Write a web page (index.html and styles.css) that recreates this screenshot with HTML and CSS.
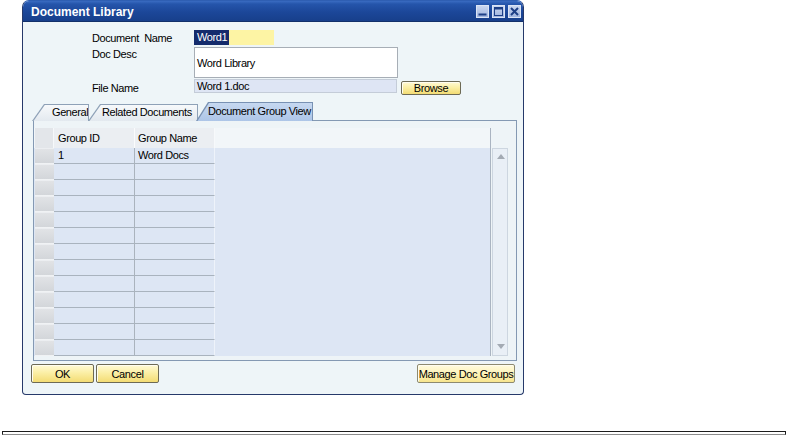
FILE: index.html
```html
<!DOCTYPE html>
<html lang="en">
<head>
<meta charset="utf-8">
<title>Document Library</title>
<link rel="stylesheet" href="styles.css">
</head>
<body>
<div class="window">
  <div class="titlebar">
    <span class="title">Document Library</span>
    <div class="winbtns">
      <span class="wb"><svg width="13" height="13" viewBox="0 0 13 13"><rect x="2.5" y="8.5" width="8" height="2" fill="#1d3f86"/></svg></span>
      <span class="wb"><svg width="13" height="13" viewBox="0 0 13 13"><rect x="2.5" y="2.5" width="8" height="8" fill="none" stroke="#1d3f86"/><rect x="2.5" y="2.5" width="8" height="2" fill="#1d3f86"/></svg></span>
      <span class="wb"><svg width="13" height="13" viewBox="0 0 13 13"><path d="M3 3 L10 10 M10 3 L3 10" stroke="#1d3f86" stroke-width="2"/></svg></span>
    </div>
  </div>

  <div class="content">
    <div class="form">
      <div class="row r1">
        <label class="lbl">Document&nbsp; Name</label>
        <div class="field mandatory"><span class="sel">Word1</span></div>
      </div>
      <div class="row r2">
        <label class="lbl">Doc Desc</label>
        <div class="field memo">Word Library</div>
      </div>
      <div class="row r3">
        <label class="lbl">File Name</label>
        <div class="field readonly">Word 1.doc</div>
        <button class="btn browse">Browse</button>
      </div>
    </div>

    <div class="tabs">
      <div class="tab t-general"><div class="tab-face">General</div></div>
      <div class="tab t-related"><div class="tab-face">Related Documents</div></div>
      <div class="tab t-group active"><div class="tab-face">Document Group View</div></div>
    </div>

    <div class="panel">
      <div class="grid">
        <div class="ghead">
          <span class="rh"></span>
          <span class="c c1">Group ID</span>
          <span class="c c2">Group Name</span>
        </div>
        <div class="grow"><span class="rh"></span><span class="c c1">1</span><span class="c c2">Word Docs</span></div>
        <div class="grow"><span class="rh"></span><span class="c c1"></span><span class="c c2"></span></div>
        <div class="grow"><span class="rh"></span><span class="c c1"></span><span class="c c2"></span></div>
        <div class="grow"><span class="rh"></span><span class="c c1"></span><span class="c c2"></span></div>
        <div class="grow"><span class="rh"></span><span class="c c1"></span><span class="c c2"></span></div>
        <div class="grow"><span class="rh"></span><span class="c c1"></span><span class="c c2"></span></div>
        <div class="grow"><span class="rh"></span><span class="c c1"></span><span class="c c2"></span></div>
        <div class="grow"><span class="rh"></span><span class="c c1"></span><span class="c c2"></span></div>
        <div class="grow"><span class="rh"></span><span class="c c1"></span><span class="c c2"></span></div>
        <div class="grow"><span class="rh"></span><span class="c c1"></span><span class="c c2"></span></div>
        <div class="grow"><span class="rh"></span><span class="c c1"></span><span class="c c2"></span></div>
        <div class="grow"><span class="rh"></span><span class="c c1"></span><span class="c c2"></span></div>
        <div class="grow"><span class="rh"></span><span class="c c1"></span><span class="c c2"></span></div>
      </div>
      <div class="vs-col">
        <div class="vscroll">
          <svg class="arrow" width="8" height="5" viewBox="0 0 8 5"><path d="M0 5 L4 0 L8 5 Z" fill="#a3aab3"/></svg>
          <svg class="arrow" width="8" height="5" viewBox="0 0 8 5"><path d="M0 0 L8 0 L4 5 Z" fill="#a3aab3"/></svg>
        </div>
      </div>
    </div>

    <div class="actions">
      <button class="btn ok">OK</button>
      <button class="btn cancel">Cancel</button>
      <button class="btn manage">Manage Doc Groups</button>
    </div>
  </div>
</div>

<div class="rule"></div>
</body>
</html>
```

FILE: styles.css
```css
* {
  box-sizing: border-box;
}

body {
  margin: 0;
  background: #ffffff;
  font-family: "Liberation Sans", Arial, sans-serif;
  font-size: 11px;
  letter-spacing: -0.4px;
  color: #000000;
}

/* ---------- window frame ---------- */
.window {
  margin-left: 22px;
  width: 502px;
  border: 1px solid #26396a;
  border-top-color: #2f5fb3;
  border-radius: 7px 7px 4px 4px;
  background: #eef5f8;
  overflow: hidden;
}

.titlebar {
  height: 21px;
  display: flex;
  align-items: center;
  justify-content: space-between;
  padding: 0 2px 0 8px;
  background: linear-gradient(#3a6cc2 0, #2555ab 3px, #1c4799 55%, #173f8b 100%);
  border-bottom: 1px solid #12306a;
}

.title {
  color: #ffffff;
  font-weight: bold;
  font-size: 12px;
  letter-spacing: 0;
  padding-top: 1px;
}

.winbtns {
  display: flex;
  gap: 3px;
  padding-top: 1px;
}

.wb {
  width: 13px;
  height: 13px;
  display: block;
  border: 1px solid #dbe4f5;
  background: linear-gradient(#c9d6ef, #9fb4df);
}

.wb svg {
  display: block;
  margin: -1px;
}

/* ---------- header form ---------- */
.form {
  padding: 8px 0 0 69px;
}

.row {
  display: flex;
  align-items: flex-start;
}

.lbl {
  width: 102px;
  flex: none;
}

.r1 {
  height: 15px;
}

.r1 .lbl {
  padding-top: 2px;
}

.r2 {
  margin-top: 2px;
  height: 31px;
}

.r2 .lbl {
  padding-top: 1px;
}

.r3 {
  margin-top: 1px;
  height: 16px;
}

.r3 .lbl {
  padding-top: 3px;
}

.field {
  height: 100%;
}

.mandatory {
  width: 80px;
  background: #fdf4a4;
}

.sel {
  display: inline-block;
  height: 15px;
  line-height: 15px;
  padding: 0 2px 0 3px;
  background: #142b6c;
  color: #ffffff;
}

.memo {
  width: 204px;
  background: #ffffff;
  border: 1px solid #a7aeb6;
  display: flex;
  align-items: center;
  padding: 1px 0 0 2px;
}

.readonly {
  width: 203px;
  height: 14px;
  line-height: 12px;
  padding-left: 2px;
  background: #dee5f4;
  border: 1px solid #c4ccd8;
}

/* ---------- buttons ---------- */
.btn {
  height: 19px;
  padding: 0;
  font: inherit;
  letter-spacing: inherit;
  color: #000000;
  border: 1px solid #6d6a55;
  border-radius: 2px;
  background: linear-gradient(#fffad6, #fbefa6 45%, #f3dc74);
  box-shadow: inset 1px 1px 0 #fffdf0;
}

.browse {
  width: 60px;
  height: 14px;
  line-height: 12px;
  margin: 2px 0 0 4px;
}

/* ---------- tab strip ---------- */
.tabs {
  display: flex;
  align-items: flex-end;
  height: 19px;
  margin: 7px 0 0 9px;
  position: relative;
  z-index: 2;
}

.tab {
  height: 17px;
  padding: 1px 1px 0 1px;
  background: #8ea1b7;
  clip-path: polygon(12px 0, 100% 0, 100% 100%, 0 100%);
}

.tab-face {
  height: 100%;
  line-height: 15px;
  background: linear-gradient(#f7f9fb, #e3e9ef);
  clip-path: polygon(11.8px 0, 100% 0, 100% 100%, 0.5px 100%);
  white-space: nowrap;
}

.t-general {
  width: 57px;
}

.t-general .tab-face {
  padding-left: 19px;
}

.t-related {
  width: 110px;
  margin-left: -1px;
}

.t-related .tab-face {
  padding-left: 13px;
}

.t-group {
  width: 117px;
  margin-left: -2px;
}

.t-group .tab-face {
  padding-left: 11px;
}

.tab.active {
  height: 19px;
  background: #7891b3;
}

.tab.active .tab-face {
  line-height: 17px;
  background: linear-gradient(#c6d8f0, #adc5e7);
  clip-path: polygon(12px 0, 100% 0, 100% 100%, 0.5px 100%);
}

/* ---------- grid panel ---------- */
.panel {
  display: flex;
  margin: -1px 6px 0 10px;
  padding: 7px 0 4px 0;
  border: 1px solid #8499b3;
  background: #eef4f7;
  position: relative;
  z-index: 1;
}

.grid {
  width: 457px;
  background: #dde6f4;
  border-right: 1px solid #aab4c1;
}

.ghead {
  display: flex;
  height: 20px;
  line-height: 20px;
  background: #f2f6f9;
}

.grow {
  display: flex;
  height: 16px;
  line-height: 15px;
}

.rh {
  width: 19px;
  margin-left: 1px;
  flex: none;
}

.ghead .rh {
  background: #e3e6ea;
  border-right: 1px solid #f6f8fa;
}

.grow .rh {
  background: linear-gradient(#e1e3e6, #d3d6da);
  border-top: 1px solid #eceef1;
  border-bottom: 1px solid #f0f2f4;
}

.c {
  flex: none;
  white-space: nowrap;
}

.c1 {
  width: 81px;
  padding-left: 4px;
}

.c2 {
  width: 80px;
  padding-left: 3px;
}

.ghead .c {
  background: #ebeef2;
}

.ghead .c1 {
  border-right: 1px solid #fafbfc;
}

.ghead .c2 {
  border-right: 1px solid #f7f9fb;
}

.grow .c {
  border-bottom: 1px solid #a9b3be;
}

.grow .c1 {
  border-right: 1px solid #aab3bd;
}

.grow .c2 {
  border-right: 1px solid #eef3fa;
}

.vs-col {
  width: 25px;
  padding: 20px 0 0 1px;
}

.vscroll {
  width: 16px;
  height: 208px;
  border: 1px solid #cdd6e0;
  background: #e9eff6;
  display: flex;
  flex-direction: column;
  justify-content: space-between;
  align-items: center;
  padding: 5px 0 6px 0;
}

.arrow {
  display: block;
  margin-left: 1px;
}

/* ---------- bottom buttons ---------- */
.actions {
  display: flex;
  margin: 3px 8px 0 8px;
  padding-bottom: 11px;
}

.ok,
.cancel {
  width: 63px;
}

.cancel {
  margin-left: 2px;
}

.manage {
  width: 98px;
  margin-left: auto;
  background: linear-gradient(#fffbe0, #fdf3b8 50%, #f7e58e);
  border-color: #8d8a70;
}

/* ---------- page rule ---------- */
.rule {
  margin: 36px 0 0 2px;
  width: 784px;
  height: 4px;
  border-top: 1px solid #1c1c1c;
  border-bottom: 1px solid #8c8c8c;
  border-left: 1px solid #1c1c1c;
  border-right: 1px solid #1c1c1c;
}
```
